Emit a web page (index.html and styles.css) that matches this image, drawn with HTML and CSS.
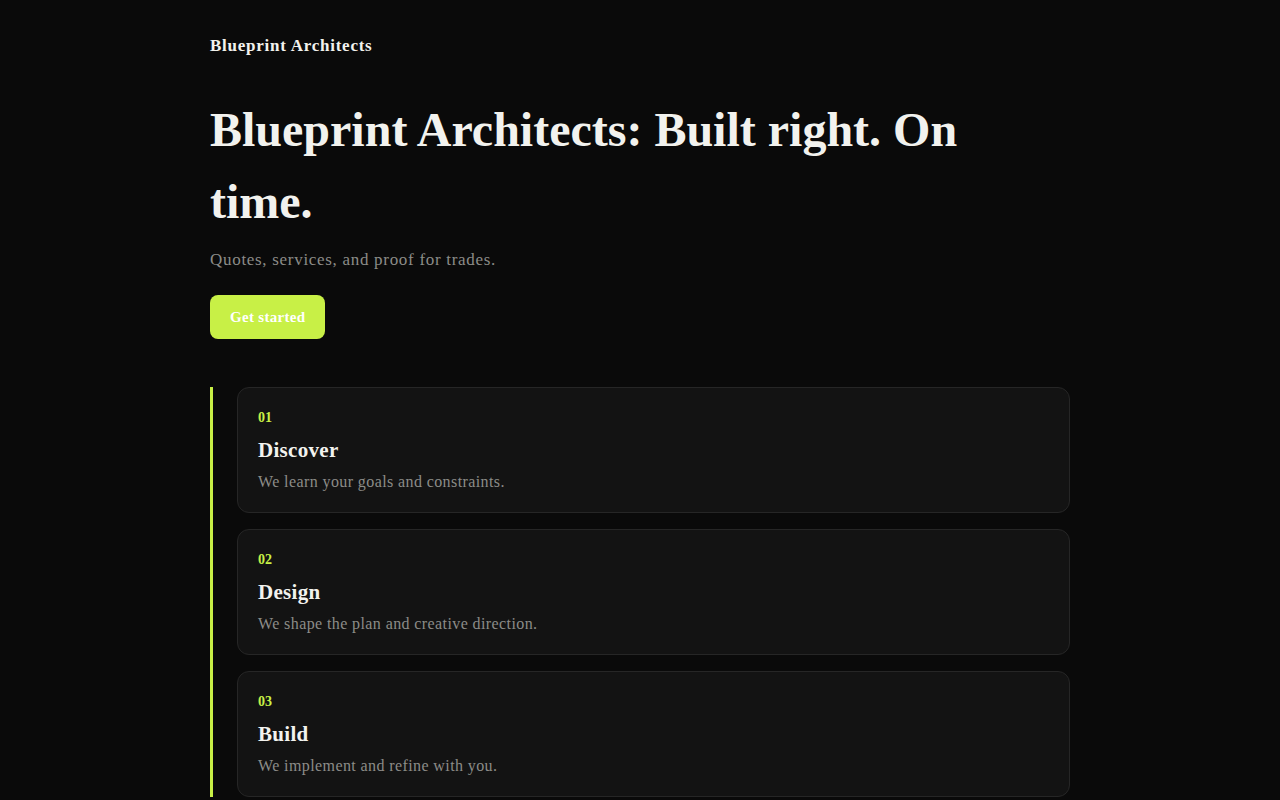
FILE: index.html
```html
<!DOCTYPE html>
<html lang="en">
<head>
<meta charset="utf-8">
<title>Blueprint Architects</title>
<link rel="stylesheet" href="styles.css">
</head>
<body>

<div class="page">
  <header class="top">
    <span class="brand">Blueprint Architects</span>
  </header>

  <section class="hero">
    <h1>Blueprint Architects: Built right. On time.</h1>
    <p class="lede">Quotes, services, and proof for trades.</p>
    <a class="btn" href="#">Get started</a>
  </section>

  <ol class="steps">
    <li class="step">
      <span class="num">01</span>
      <h3>Discover</h3>
      <p>We learn your goals and constraints.</p>
    </li>
    <li class="step">
      <span class="num">02</span>
      <h3>Design</h3>
      <p>We shape the plan and creative direction.</p>
    </li>
    <li class="step">
      <span class="num">03</span>
      <h3>Build</h3>
      <p>We implement and refine with you.</p>
    </li>
  </ol>
</div>

</body>
</html>
```

FILE: styles.css
```css
html, body {
  margin: 0;
  padding: 0;
  background: #0a0a0a;
  color: #f2f2ee;
  font-family: "Liberation Serif", "DejaVu Serif", serif;
}

.page {
  width: 860px;
  margin: 0 auto;
  padding: 33px 0 0;
}

.top {
  height: 26px;
  display: flex;
  align-items: center;
}
.brand {
  font-size: 17px;
  font-weight: 700;
  letter-spacing: 0.75px;
}

.hero {
  padding-top: 35px;
}
.hero h1 {
  margin: 0;
  font-size: 48px;
  line-height: 72px;
  font-weight: 600;
  max-width: 760px;
}
.lede {
  margin: 12px 0 0;
  font-size: 17px;
  letter-spacing: 0.7px;
  color: #8c8c88;
}
.btn {
  display: inline-flex;
  align-items: center;
  height: 44px;
  margin-top: 25px;
  padding: 0 20px;
  border-radius: 8px;
  background: #c8f046;
  color: #fff;
  font-size: 15px;
  letter-spacing: 0.3px;
  font-weight: 700;
  text-decoration: none;
}

/* process timeline */
.steps {
  list-style: none;
  margin: 48px 0 0;
  padding: 0 0 0 24px;
  border-left: 3px solid #c8f046;
  display: flex;
  flex-direction: column;
  gap: 16px;
}
.step {
  background: #131313;
  border: 1px solid #262626;
  border-radius: 12px;
  padding: 20px 20px 18px;
}
.num {
  display: block;
  font-size: 14px;
  font-weight: 700;
  color: #c8f046;
  line-height: 20px;
}
.step h3 {
  margin: 8px 0 0;
  font-size: 21px;
  line-height: 28px;
  font-weight: 700;
  letter-spacing: 0.3px;
}
.step p {
  margin: 6px 0 0;
  font-size: 16px;
  line-height: 24px;
  letter-spacing: 0.4px;
  color: #8c8c88;
}
```
